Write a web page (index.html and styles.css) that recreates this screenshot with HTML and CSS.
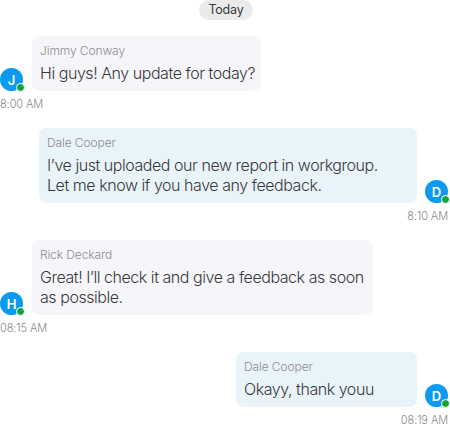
FILE: index.html
```html
<!DOCTYPE html>
<html>
<head>
<meta charset="utf-8">
<link rel="stylesheet" href="styles.css">
</head>
<body>
<div class="chat">
  <div class="day"><span class="day-pill">Today</span></div>

  <div class="msg in">
    <div class="row">
      <div class="avatar">J<span class="dot"></span></div>
      <div class="bubble b1">
        <div class="name">Jimmy Conway</div>
        <div class="text">Hi guys! Any update for today?</div>
      </div>
    </div>
    <div class="time">8:00 AM</div>
  </div>

  <div class="msg out">
    <div class="row">
      <div class="bubble b2">
        <div class="name">Dale Cooper</div>
        <div class="text">I’ve just uploaded our new report in workgroup.<br>Let me know if you have any feedback.</div>
      </div>
      <div class="avatar">D<span class="dot"></span></div>
    </div>
    <div class="time">8:10 AM</div>
  </div>

  <div class="msg in">
    <div class="row">
      <div class="avatar">H<span class="dot"></span></div>
      <div class="bubble b3">
        <div class="name">Rick Deckard</div>
        <div class="text">Great! I’ll check it and give a feedback as soon<br>as possible.</div>
      </div>
    </div>
    <div class="time">08:15 AM</div>
  </div>

  <div class="msg out">
    <div class="row">
      <div class="bubble b4">
        <div class="name">Dale Cooper</div>
        <div class="text">Okayy, thank youu</div>
      </div>
      <div class="avatar">D<span class="dot"></span></div>
    </div>
    <div class="time">08:19 AM</div>
  </div>
</div>
</body>
</html>
```

FILE: styles.css
```css
* { box-sizing: border-box; }
html, body { margin: 0; padding: 0; background: #ffffff; }
body {
  font-family: Inter, "Open Sans", sans-serif;
  color: #333333;
  width: 450px;
  height: 428px;
  overflow: hidden;
}
.chat {
  display: flex;
  flex-direction: column;
  gap: 16px;
  padding: 0 2px 0 0;
}
.day { display: flex; justify-content: center; padding-left: 4px; }
.day-pill {
  background: #e9ebea;
  color: #3a3a3a;
  font-size: 12.5px;
  font-weight: 400;
  letter-spacing: -0.2px;
  height: 20px;
  line-height: 20px;
  padding: 0 9px;
  border-radius: 10px;
}
.msg { display: flex; flex-direction: column; }
.msg.out { align-items: flex-end; }
.row { display: flex; align-items: flex-end; }
.msg.in .row { gap: 9px; }
.msg.out .row { gap: 8px; }
.avatar {
  position: relative;
  width: 23px;
  height: 23px;
  border-radius: 50%;
  background: #0b9af0;
  color: #ffffff;
  font-size: 13px;
  font-weight: 600;
  display: flex;
  align-items: center;
  justify-content: center;
  flex: none;
}
.dot {
  position: absolute;
  right: -2px;
  bottom: -1px;
  width: 9px;
  height: 9px;
  border-radius: 50%;
  background: #17a33c;
  border: 1.5px solid #ffffff;
}
.bubble {
  border-radius: 8px;
  padding: 7px 8px 8px 8px;
}
.msg.in .bubble { background: #f5f5fa; }
.msg.out .bubble { background: #e9f3fa; }
.b1 { width: 229px; }
.b2 { width: 378px; }
.b3 { width: 341px; }
.b4 { width: 181px; }
.name {
  font-size: 12px;
  line-height: 16px;
  color: #8d8d8d;
  font-weight: 300;
  letter-spacing: -0.1px;
  margin-bottom: 4px;
}
.text {
  font-size: 16px;
  line-height: 20px;
  font-weight: 300;
  letter-spacing: -0.45px;
  color: #3a3a3a;
  white-space: nowrap;
}
.time {
  margin-top: 5px;
  font-size: 11px;
  line-height: 16px;
  color: #8a8a8a;
  font-weight: 300;
  letter-spacing: -0.1px;
}
```
